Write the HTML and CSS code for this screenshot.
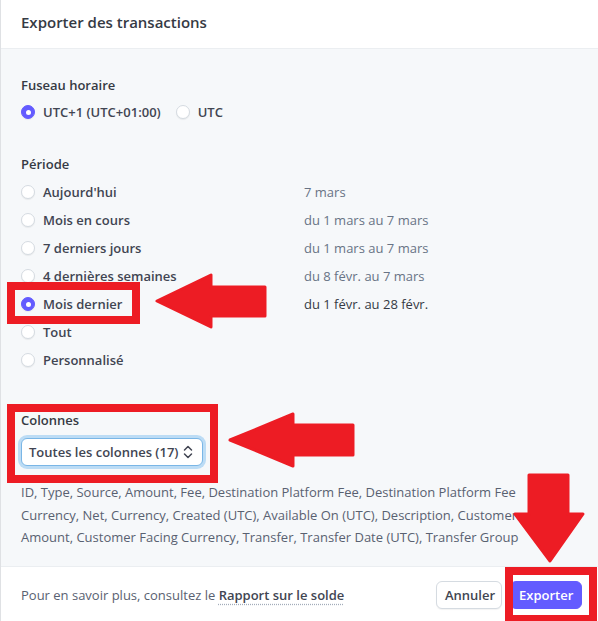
FILE: index.html
```html
<!DOCTYPE html>
<html lang="fr">
<head>
<meta charset="utf-8">
<title>Exporter des transactions</title>
<link rel="stylesheet" href="styles.css">
</head>
<body>
<div class="modal">
  <header class="modal-head">
    <h1 class="modal-title">Exporter des transactions</h1>
  </header>

  <main class="modal-body">
    <section class="field field-tz">
      <div class="field-label">Fuseau horaire</div>
      <div class="radio-inline">
        <label class="radio is-checked"><span class="radio-dot"></span>UTC+1 (UTC+01:00)</label>
        <label class="radio"><span class="radio-dot"></span>UTC</label>
      </div>
    </section>

    <section class="field field-period">
      <div class="field-label">Période</div>
      <ul class="period-list">
        <li class="period-row"><label class="radio"><span class="radio-dot"></span>Aujourd'hui</label><span class="range">7 mars</span></li>
        <li class="period-row"><label class="radio"><span class="radio-dot"></span>Mois en cours</label><span class="range">du 1 mars au 7 mars</span></li>
        <li class="period-row"><label class="radio"><span class="radio-dot"></span>7 derniers jours</label><span class="range">du 1 mars au 7 mars</span></li>
        <li class="period-row"><label class="radio"><span class="radio-dot"></span>4 dernières semaines</label><span class="range">du 8 févr. au 7 mars</span></li>
        <li class="period-row"><label class="radio is-checked"><span class="radio-dot"></span>Mois dernier</label><span class="range is-active">du 1 févr. au 28 févr.</span></li>
        <li class="period-row"><label class="radio"><span class="radio-dot"></span>Tout</label></li>
        <li class="period-row"><label class="radio"><span class="radio-dot"></span>Personnalisé</label></li>
      </ul>
    </section>

    <section class="field field-cols">
      <div class="field-label">Colonnes</div>
      <div class="select">
        <span class="select-value">Toutes les colonnes (17)</span>
        <svg class="select-chevron" width="10" height="16" viewBox="0 0 10 16" aria-hidden="true">
          <path d="M1.5 6 L5 2.5 L8.5 6" fill="none" stroke="#414552" stroke-width="1.5" stroke-linecap="round" stroke-linejoin="round"/>
          <path d="M1.5 10 L5 13.5 L8.5 10" fill="none" stroke="#414552" stroke-width="1.5" stroke-linecap="round" stroke-linejoin="round"/>
        </svg>
      </div>
      <p class="col-list">ID, Type, Source, Amount, Fee, Destination Platform Fee, Destination Platform Fee Currency, Net, Currency, Created (UTC), Available On (UTC), Description, Customer Amount, Customer Facing Currency, Transfer, Transfer Date (UTC), Transfer Group</p>
    </section>
  </main>

  <footer class="modal-foot">
    <p class="foot-note">Pour en savoir plus, consultez le <a class="foot-link">Rapport sur le solde</a></p>
    <div class="foot-actions">
      <button class="btn btn-secondary">Annuler</button>
      <button class="btn btn-primary">Exporter</button>
    </div>
  </footer>

  <!-- red callouts drawn over the dialog -->
  <div class="callout callout-period"></div>
  <div class="callout callout-cols"></div>
  <div class="callout callout-export"></div>
  <svg class="callout-arrows" width="598" height="621" viewBox="0 0 598 621" aria-hidden="true">
    <polygon points="156,301 210,275 210,287 264,287 264,316 210,316 210,327" />
    <polygon points="229,440 292,414 292,425 352,425 352,455 292,455 292,466" />
    <polygon points="528,475 567,475 567,514 582,514 549,561 514,514 528,514" />
  </svg>
</div>
</body>
</html>
```

FILE: styles.css
```css
* { box-sizing: border-box; }

html, body {
  margin: 0;
  padding: 0;
  background: #ffffff;
}

body {
  font-family: "Open Sans", "Noto Sans", sans-serif;
  font-size: 13px;
  color: #353a44;
}

.modal {
  position: relative;
  width: 598px;
  height: 621px;
  display: flex;
  flex-direction: column;
  border-left: 1px solid #dfe1e4;
  overflow: hidden;
}

/* header */
.modal-head {
  height: 49px;
  padding: 11px 20px 0;
  border-bottom: 1px solid #ebeef1;
  background: #ffffff;
}

.modal-title {
  margin: 0;
  font-size: 15px;
  line-height: 22px;
  font-weight: 600;
  color: #353a44;
}

/* body */
.modal-body {
  flex: 1;
  background: #f6f8fa;
  padding: 26px 20px 0;
}

.field-label {
  font-size: 13px;
  line-height: 20px;
  font-weight: 600;
  color: #353a44;
}

.field-tz .field-label { margin-bottom: 3px; }

.radio-inline {
  display: flex;
  gap: 15px;
}

.radio {
  display: flex;
  align-items: center;
  gap: 8px;
  height: 28px;
  font-size: 13px;
  font-weight: 600;
  color: #414552;
  white-space: nowrap;
}

.radio-dot {
  width: 14px;
  height: 14px;
  border-radius: 50%;
  background: #ffffff;
  border: 1px solid #d5dbe1;
  box-shadow: 0 1px 1px rgba(0, 0, 0, 0.06);
  flex: none;
  display: flex;
  align-items: center;
  justify-content: center;
}

.radio.is-checked .radio-dot {
  background: #635bff;
  border-color: #635bff;
}

.radio.is-checked .radio-dot::after {
  content: "";
  width: 5px;
  height: 5px;
  border-radius: 50%;
  background: #ffffff;
}

/* period */
.field-period { margin-top: 28px; }
.field-period .field-label { margin-bottom: 4px; }

.period-list {
  list-style: none;
  margin: 0;
  padding: 0;
}

.period-row {
  display: grid;
  grid-template-columns: 283px 1fr;
  align-items: center;
  height: 28px;
}

.range {
  font-size: 13px;
  color: #687385;
}

.range.is-active { color: #353a44; }

/* columns */
.field-cols { margin-top: 36px; }
.field-cols .field-label { margin-bottom: 8px; }

.select {
  width: 182px;
  height: 28px;
  display: flex;
  align-items: center;
  justify-content: space-between;
  padding: 0 9px 0 7px;
  background: #ffffff;
  border: 1px solid #7ab6e6;
  border-radius: 6px;
  box-shadow: 0 0 0 3px #bcdcf5;
  font-size: 13px;
  font-weight: 600;
  color: #414552;
}

.col-list {
  margin: 15px 0 0;
  max-width: 535px;
  font-size: 13px;
  line-height: 22.5px;
  color: #596171;
}

/* footer */
.modal-foot {
  height: 55px;
  flex: none;
  border-top: 1px solid #ebeef1;
  background: #ffffff;
  display: flex;
  align-items: center;
  justify-content: space-between;
  padding: 1px 16px 0 20px;
}

.foot-note {
  margin: 0;
  font-size: 13px;
  color: #596171;
}

.foot-link {
  font-weight: 600;
  color: #414552;
  text-decoration: underline dotted #a3acba;
  text-underline-offset: 4px;
}

.foot-actions {
  display: flex;
  gap: 8px;
}

.btn {
  height: 28px;
  padding: 0 8px;
  border-radius: 6px;
  font-family: inherit;
  font-size: 13px;
  font-weight: 600;
  line-height: 26px;
}

.btn-secondary {
  background: #ffffff;
  border: 1px solid #d5dbe1;
  color: #414552;
  box-shadow: 0 1px 1px rgba(0, 0, 0, 0.05);
  width: 66px;
}

.btn-primary {
  background: #635bff;
  border: 1px solid #635bff;
  color: #ffffff;
  width: 72px;
}

/* red callouts */
.callout {
  position: absolute;
  border: 8px solid #ed1c24;
}

.callout-period { left: 6px; top: 282px; width: 133px; height: 42px; }
.callout-cols { left: 6px; top: 404px; width: 211px; height: 79px; }
.callout-export { left: 504px; top: 567px; width: 92px; height: 56px; }

.callout-arrows {
  position: absolute;
  left: 0;
  top: 0;
}

.callout-arrows polygon {
  fill: #ed1c24;
  stroke: #ed1c24;
  stroke-width: 3;
  stroke-linejoin: round;
}
```
